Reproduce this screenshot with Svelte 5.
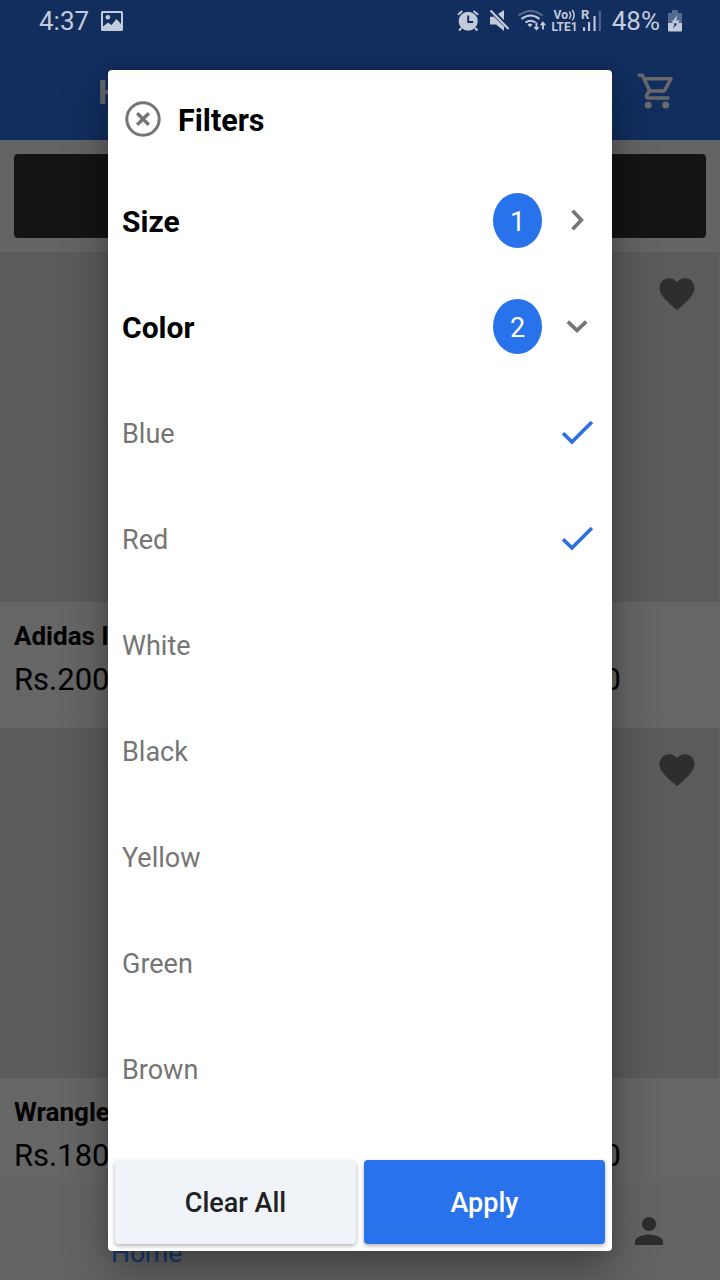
<script>
  const colors = [
    { name: 'Blue', on: true },
    { name: 'Red', on: true },
    { name: 'White', on: false },
    { name: 'Black', on: false },
    { name: 'Yellow', on: false },
    { name: 'Green', on: false },
    { name: 'Brown', on: false }
  ];
  const products = [
    { name: 'Adidas I', price: 'Rs.200', tail: '0' },
    { name: 'Wrangle', price: 'Rs.180', tail: '0' }
  ];
</script>

<div class="screen">
  <div class="page">
    <header>
      <div class="status">
        <span class="time">4:37</span>
        <svg class="photo" width="22" height="20" viewBox="0 0 22 20"><path fill-rule="evenodd" d="M1.5 0h19Q22 0 22 1.500v17Q22 20 20.500 20h-19Q0 20 0 18.500v-17Q0 0 1.500 0zM2 2v13.500l5-4 3.500 2.500 5-6 4.500 5V2z" /><circle cx="6.800" cy="6.300" r="2.300" /></svg>
        <span class="fill"></span>
        <svg class="icons" width="146" height="24" viewBox="456 8 146 24">
          <path d="M458 13.700l4.300-3.700M473.500 10l4.700 3.700M461.500 27l-2.500 2.500M475 27l2.500 2.500" stroke="currentColor" stroke-width="2" />
          <circle cx="468.200" cy="20.200" r="9.500" />
          <path d="M468.200 14.500v6.500h5" fill="none" stroke="#112e5f" stroke-width="1.900" />
          <path d="M490 15.700h4l10 9.800v4.500l-8-6.500h-6zM498 13l6-4v10z" />
          <path d="M490.500 9.500l18 18.500" stroke="currentColor" stroke-width="2.200" />
          <g fill="none" stroke="currentColor" stroke-width="2">
            <path d="M518.500 14.500q12-9 24 0" opacity=".4" />
            <path d="M521.500 18q9-7 18 0" />
            <path d="M525.500 21.500q5-3.500 10 0" />
          </g>
          <path d="M527.500 23.500q2.500-2 5 0l-2.500 2.800z" />
          <path d="M535.500 21.500h1.900v4.500h2.100l-3 3.800-3-3.800h2zM542 28.500h1.900v-4.200h2.300l-3.300-4-3.200 4h2.300z" />
          <text x="553.500" y="18.300" font-size="12.500" textLength="14.500" lengthAdjust="spacingAndGlyphs">Vo</text>
          <path d="M569.300 10.500q2.700 3.700 0 7.400M572.300 9q3.600 5.200 0 10.400" fill="none" stroke="currentColor" stroke-width="1.500" />
          <text x="551.500" y="30" font-size="12.500" textLength="26" lengthAdjust="spacingAndGlyphs">LTE1</text>
          <text x="581" y="18" font-size="13">R</text>
          <path d="M583 26.200h2.100v3.800h-2.100zM588 21h2.100v9h-2.100zM593.500 15h2.100v15h-2.100z" />
          <path d="M598.800 9.800h2.100V30h-2.100z" opacity=".35" />
        </svg>
        <span class="pct">48%</span>
        <svg class="battery" width="14" height="22" viewBox="0 0 14 22"><path opacity=".38" d="M4 0h6v3h3q1 0 1 1v9H0V4q0-1 1-1h3z" /><path d="M0 13h14v7.500q0 1-1 1H1q-1 0-1-1z" /><path d="M9.500 5l-6 7.500 3.500.5h3.500l1-2.500H8z" /><path fill="#112e5f" d="M5.500 13.500h4L5 18.500l1.500-4z" /></svg>
      </div>
      <div class="bar">
        <span class="heading">H</span>
        <svg width="42" height="42" viewBox="0 0 24 24" fill="#69696b"><path d="M15.550 13c.750 0 1.410-.410 1.750-1.030l3.580-6.490A1 1 0 0 0 20.010 4H5.210l-.940-2H1v2h2l3.600 7.590-1.350 2.440C4.520 15.370 5.480 17 7 17h12v-2H7l1.100-2h7.450zM6.160 6h12.150l-2.760 5H8.530L6.160 6zM7 18a2 2 0 1 0 0 4 2 2 0 0 0 0-4zm10 0a2 2 0 1 0 0 4 2 2 0 0 0 0-4z" /></svg>
      </div>
    </header>
    <div class="tools"><div class="dark"></div></div>
    {#each products as p}
      <section>
        <div class="photo-area">
          <svg width="42" height="42" viewBox="0 0 24 24" fill="#2e2e2e"><path d="M12 21.350l-1.450-1.320C5.400 15.360 2 12.280 2 8.500 2 5.420 4.420 3 7.500 3c1.740 0 3.410.810 4.500 2.090C13.090 3.810 14.760 3 16.500 3 19.580 3 22 5.420 22 8.500c0 3.780-3.400 6.860-8.550 11.540L12 21.350z" /></svg>
        </div>
        <div class="info">
          <div class="name">{p.name}</div>
          <div class="price"><span>{p.price}</span><span>{p.tail}</span></div>
        </div>
      </section>
    {/each}
    <nav>
      <span class="home">Home</span>
      <svg width="42" height="42" viewBox="0 0 24 24" fill="#2d2d2d"><path d="M12 12a4 4 0 1 0 0-8 4 4 0 0 0 0 8zm0 2c-2.670 0-8 1.340-8 4v2h16v-2c0-2.660-5.330-4-8-4z" /></svg>
    </nav>
  </div>

  <div class="overlay">
    <div class="dialog">
      <div class="title">
        <svg width="36" height="36" viewBox="0 0 36 36" fill="none" stroke="#757575"><circle cx="18" cy="18" r="16.200" stroke-width="3" /><path d="M12.200 12.200l11.600 11.600M23.800 12.200L12.200 23.800" stroke-width="3.400" /></svg>
        <span>Filters</span>
      </div>
      <div class="row group">
        <span>Size</span><span class="fill"></span><b class="badge">1</b>
        <svg width="42" height="42" viewBox="0 0 42 42" fill="none" stroke="#757575" stroke-width="3.600"><path d="M16.600 11.800l8.800 9.200-8.800 9.200" /></svg>
      </div>
      <div class="row group">
        <span>Color</span><span class="fill"></span><b class="badge">2</b>
        <svg width="42" height="42" viewBox="0 0 42 42" fill="none" stroke="#757575" stroke-width="3.600"><path d="M11.800 16.600l9.200 8.800 9.200-8.800" /></svg>
      </div>
      {#each colors as c}
        <div class="row option">
          <span>{c.name}</span><span class="fill"></span>
          {#if c.on}
            <svg width="42" height="42" viewBox="0 0 42 42" fill="none" stroke="#2b6fe0" stroke-width="3.600"><path d="M7 22.300l8.900 8.600 20-20" /></svg>
          {/if}
        </div>
      {/each}
      <div class="actions">
        <button class="clear">Clear All</button>
        <button class="apply">Apply</button>
      </div>
    </div>
  </div>
</div>

<style>
  .screen { display: grid; width: 720px; height: 1280px; overflow: hidden; font-family: Roboto, sans-serif; color: #000; }
  .page, .overlay { grid-area: 1 / 1; min-width: 0; }
  .page { background: #666; }
  svg { display: block; flex: none; }
  .fill { flex: 1; }
  header { height: 140px; background: #112e5f; box-shadow: 0 1px 3px rgba(0, 0, 0, .3); }
  .status { display: flex; align-items: center; height: 42px; padding: 0 38px 0 39px; color: #c3cbda; fill: currentColor; font-size: 26px; box-sizing: border-box; }
  .status .photo { margin-left: 12px; }
  .pct { margin-left: 9px; }
  .icons { margin-right: 1px; overflow: visible; }
  .battery { margin-left: 8px; }
  .icons text { font-weight: 700; }
  .bar { display: flex; align-items: center; justify-content: space-between; height: 98px; padding: 0 42px 0 98px; }
  .heading { font-size: 34px; font-weight: 700; color: #69696b; padding-top: 1px; }
  .tools { height: 112px; padding: 14px; box-sizing: border-box; background: #636466; }
  .dark { height: 84px; background: #141414; border-radius: 4px; }
  section { height: 476px; }
  .photo-area { height: 350px; background: #5a5c5b; display: flex; justify-content: flex-end; padding: 21px 21px 0 0; box-sizing: border-box; border-right: 1px solid #626363; }
  .info { height: 112px; padding: 14px 99px 0 14px; box-sizing: border-box; border-bottom: 1px solid #626262; }
  .name { font-size: 26px; line-height: 40px; font-weight: 700; }
  .price { display: flex; justify-content: space-between; font-size: 31px; line-height: 48px; }
  nav { display: flex; justify-content: space-between; height: 99px; padding: 29px 50px 0 111px; box-sizing: border-box; background: #646464; margin-top: -23px; position: relative; }
  .home { font-size: 26.500px; line-height: 30px; padding-top: 28px; color: #183b75; }
  .overlay { position: relative; padding: 70px 108px 29px; }
  .dialog { height: 1181px; background: #fff; border-radius: 4px; box-shadow: 0 20px 45px rgba(0, 0, 0, .35), 0 0 14px rgba(0, 0, 0, .1); display: flex; flex-direction: column; }
  .title { height: 97px; display: flex; gap: 17px; padding: 31px 17px 0; box-sizing: border-box; font-size: 30.500px; font-weight: 700; line-height: 40px; }
  .row { display: flex; align-items: center; height: 106px; padding: 0 14px; flex: none; }
  .group { font-size: 30px; font-weight: 700; }
  .group > span { padding-top: 2px; }
  .badge { display: grid; place-items: center; width: 49px; height: 55px; padding-top: 3px; box-sizing: border-box; margin-right: 14px; border-radius: 50%; background: #2872ec; color: #fff; font-size: 27px; font-weight: 400; }
  .option { font-size: 27px; color: #757575; }
  .option > span { padding-top: 4px; }
  .actions { display: grid; grid-template-columns: 1fr 1fr; gap: 8px; padding: 0 7px 7px; margin-top: auto; }
  button { height: 84px; border: 0; border-radius: 4px; padding-top: 3px; font: 500 27px Roboto, sans-serif; box-shadow: 0 2px 4px rgba(0, 0, 0, .3); }
  .clear { background: #f0f4f8; color: #202124; }
  .apply { background: #2872ec; color: #fff; }
</style>
